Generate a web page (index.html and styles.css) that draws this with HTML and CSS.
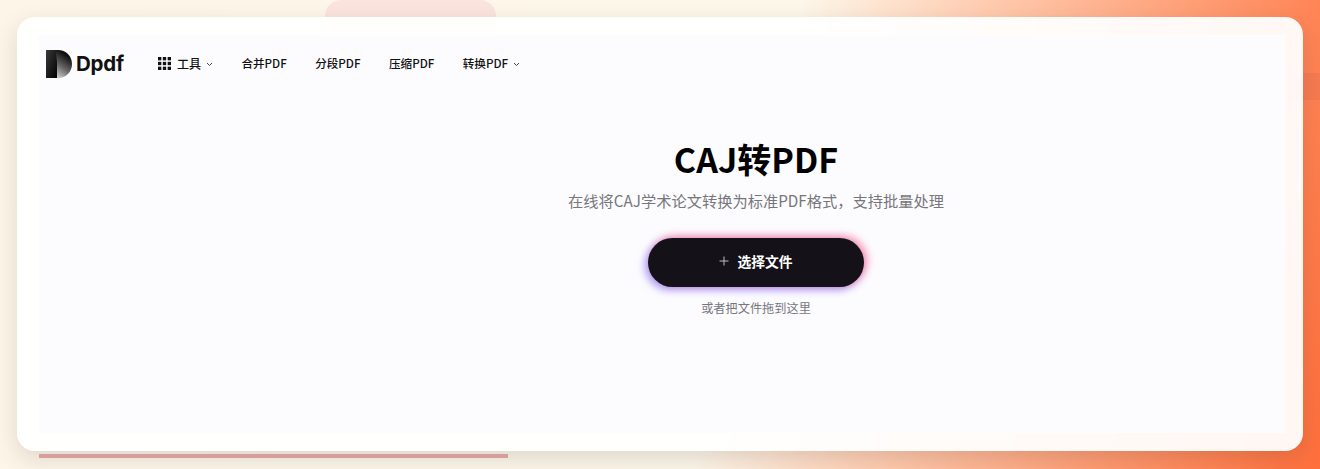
FILE: index.html
```html
<!DOCTYPE html>
<html lang="zh-CN">
<head>
    <meta charset="UTF-8">
    <meta name="viewport" content="width=device-width, initial-scale=1.0">
    <title>CAJ转PDF</title>
    <link rel="stylesheet" href="styles.css">
</head>
<body>
    <div class="back-tab"></div>
    <div class="back-band"></div>

    <div class="frame">
        <div class="inner">
            <div class="header">
                <a class="logo">
                    <svg class="logo-mark" width="26" height="28" viewBox="0 0 26 28">
                        <defs>
                            <linearGradient id="logoLeft" x1="0" y1="0" x2="1" y2="1">
                                <stop offset="0" stop-color="#3a3a3a"/>
                                <stop offset="1" stop-color="#000"/>
                            </linearGradient>
                            <linearGradient id="logoRight" x1="0.2" y1="1" x2="0.6" y2="0">
                                <stop offset="0" stop-color="#c8c8c8"/>
                                <stop offset="0.4" stop-color="#666"/>
                                <stop offset="0.85" stop-color="#111"/>
                            </linearGradient>
                        </defs>
                        <path d="M0 0H11V28H0Z" fill="url(#logoLeft)"/>
                        <path d="M10 0H12C20 0 26 6 26 14C26 22 20 28 12 28H11V12C11 9 10 7 10 0Z" fill="url(#logoRight)"/>
                    </svg>
                    <span class="logo-text">Dpdf</span>
                </a>
                <nav class="nav">
                    <a class="nav-item tools">
                        <svg width="13" height="13" viewBox="0 0 14 14" fill="#111">
                            <rect x="0" y="0" width="3.600" height="3.600"/><rect x="5.200" y="0" width="3.600" height="3.600"/><rect x="10.400" y="0" width="3.600" height="3.600"/>
                            <rect x="0" y="5.200" width="3.600" height="3.600"/><rect x="5.200" y="5.200" width="3.600" height="3.600"/><rect x="10.400" y="5.200" width="3.600" height="3.600"/>
                            <rect x="0" y="10.400" width="3.600" height="3.600"/><rect x="5.200" y="10.400" width="3.600" height="3.600"/><rect x="10.400" y="10.400" width="3.600" height="3.600"/>
                        </svg>
                        工具
                        <svg class="chevron" width="7" height="5" viewBox="0 0 7 5"><path d="M1 1L3.500 3.500L6 1" fill="none" stroke="#444" stroke-width="1"/></svg>
                    </a>
                    <a class="nav-item">合并PDF</a>
                    <a class="nav-item">分段PDF</a>
                    <a class="nav-item">压缩PDF</a>
                    <a class="nav-item">转换PDF
                        <svg class="chevron" width="7" height="5" viewBox="0 0 7 5"><path d="M1 1L3.500 3.500L6 1" fill="none" stroke="#444" stroke-width="1"/></svg>
                    </a>
                </nav>
            </div>

            <div class="hero">
                <h1>CAJ转PDF</h1>
                <p class="subtitle">在线将CAJ学术论文转换为标准PDF格式，支持批量处理</p>
                <button class="upload-btn">
                    <svg width="10" height="10" viewBox="0 0 10 10"><path d="M5 0.500V9.500M0.500 5H9.500" stroke="#bbb" stroke-width="1"/></svg>
                    选择文件
                </button>
                <p class="hint">或者把文件拖到这里</p>
            </div>
        </div>
    </div>

    <div class="progress"></div>
</body>
</html>
```

FILE: styles.css
```css
* {
    margin: 0;
    padding: 0;
    box-sizing: border-box;
}

html, body {
    height: 469px;
    overflow: hidden;
}

body {
    font-family: "Noto Sans CJK SC", "Noto Sans", sans-serif;
    background: linear-gradient(103deg, #fdf6e8 0%, #fdf7ea 56%, #ffc9ac 70%, #ff9a70 85%, #ff6f3c 100%);
    padding: 17px 17px 0;
    position: relative;
}

.back-tab {
    position: absolute;
    top: 0;
    left: 325px;
    width: 171px;
    height: 40px;
    background: #fbe4dd;
    border-radius: 16px 16px 0 0;
}

.back-band {
    position: absolute;
    top: 73px;
    right: 0;
    width: 30px;
    height: 27px;
    background: rgba(225, 110, 80, 0.3);
}

.frame {
    position: relative;
    height: 434px;
    padding: 18px 18px 18px 21px;
    background: rgba(255, 255, 255, 0.94);
    border-radius: 18px;
    box-shadow: 0 8px 24px rgba(0, 0, 0, 0.13);
}

.inner {
    height: 100%;
    background: #fcfcff;
    border: 1px solid #fefdfc;
}

.header {
    display: flex;
    align-items: center;
    height: 54px;
    padding-left: 7px;
}

.logo {
    display: flex;
    align-items: center;
    gap: 4px;
    width: 112px;
    margin-top: 1px;
}

.logo-text {
    font-family: Inter, sans-serif;
    font-size: 20.500px;
    font-weight: 700;
    letter-spacing: -0.2px;
    color: #111;
}

.nav {
    display: flex;
    align-items: center;
    gap: 28.400px;
    font-size: 11.600px;
    font-weight: 500;
    color: #111;
}

.nav-item {
    display: flex;
    align-items: center;
    gap: 5px;
}

.tools {
    font-size: 12px;
}

.tools svg:first-child {
    margin-right: 1px;
}

.chevron {
    margin-top: 2px;
}

.hero {
    display: flex;
    flex-direction: column;
    align-items: center;
    padding-top: 44px;
    padding-left: 189px;
}

.hero h1 {
    font-size: 34px;
    font-weight: 700;
    line-height: 50px;
    color: #000;
}

.subtitle {
    font-size: 15.250px;
    line-height: 24px;
    margin-top: 4px;
    color: #77767a;
}

.upload-btn {
    display: flex;
    align-items: center;
    justify-content: center;
    gap: 8px;
    width: 216px;
    height: 49px;
    margin-top: 26px;
    padding-bottom: 3px;
    border: none;
    border-radius: 25px;
    background: #141218;
    color: #fff;
    font-family: inherit;
    font-size: 13.800px;
    font-weight: 700;
    box-shadow: 3px -2px 8px rgba(245, 70, 120, 0.6), -3px 3px 8px rgba(100, 80, 245, 0.55);
}

.hint {
    font-size: 12.200px;
    line-height: 18px;
    margin-top: 12px;
    color: #77767a;
}

.progress {
    width: 469px;
    height: 4px;
    margin: 3px 0 0 22px;
    background: #e9abab;
}
```
